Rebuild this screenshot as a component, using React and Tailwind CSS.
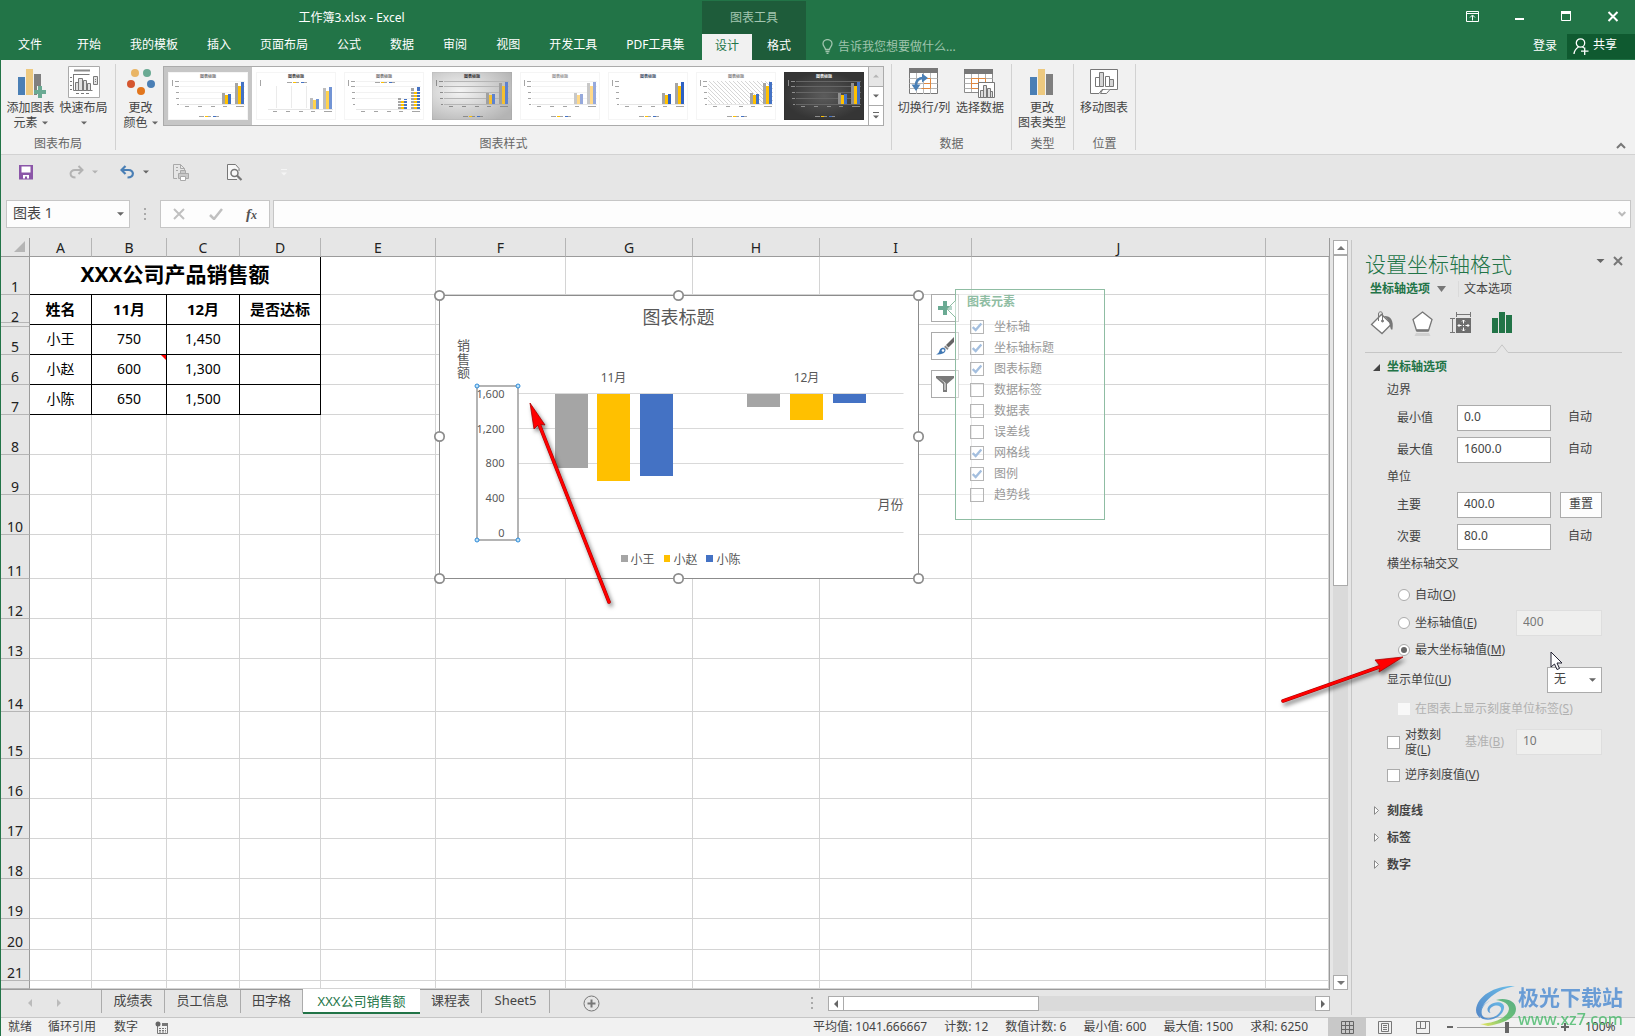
import { useState } from 'react';

const RIBBON_TABS = ['开始', '我的模板', '插入', '页面布局', '公式', '数据', '审阅', '视图', '开发工具', 'PDF工具集'];

const COLUMNS = [
  { name: 'A', width: 'w-[62px]' },
  { name: 'B', width: 'w-[75px]' },
  { name: 'C', width: 'w-[73px]' },
  { name: 'D', width: 'w-[81px]' },
  { name: 'E', width: 'w-[115px]' },
  { name: 'F', width: 'w-[130px]' },
  { name: 'G', width: 'w-[127px]' },
  { name: 'H', width: 'w-[127px]' },
  { name: 'I', width: 'w-[152px]' },
  { name: 'J', width: 'w-[294px]' },
  { name: '', width: '' },
];

const DATA_ROWS = [
  { row: 2, cells: ['姓名', '11月', '12月', '是否达标'], head: true },
  { row: 5, cells: ['小王', '750', '1,450', ''] },
  { row: 6, cells: ['小赵', '600', '1,300', ''], note: 1 },
  { row: 7, cells: ['小陈', '650', '1,500', ''] },
];

const EMPTY_ROWS = [
  { row: 8, height: 'h-[40px]' },
  { row: 9, height: 'h-[40px]' },
  { row: 10, height: 'h-[40px]' },
  { row: 11, height: 'h-[44px]' },
  { row: 12, height: 'h-[40px]' },
  { row: 13, height: 'h-[40px]' },
  { row: 14, height: 'h-[53px]' },
  { row: 15, height: 'h-[47px]' },
  { row: 16, height: 'h-[40px]' },
  { row: 17, height: 'h-[40px]' },
  { row: 18, height: 'h-[40px]' },
  { row: 19, height: 'h-[40px]' },
  { row: 20, height: 'h-[31px]' },
  { row: 21, height: 'h-[31px]' },
  { row: '', height: 'h-[8px]' },
];

const CHART_ELEMENTS = [
  ['坐标轴', true],
  ['坐标轴标题', true],
  ['图表标题', true],
  ['数据标签', false],
  ['数据表', false],
  ['误差线', false],
  ['网格线', true],
  ['图例', true],
  ['趋势线', false],
];

const SHEETS = [
  { name: '成绩表', width: 'w-[63px]' },
  { name: '员工信息', width: 'w-[76px]' },
  { name: '田字格', width: 'w-[62px]' },
  { name: 'XXX公司销售额', width: 'w-[117px]' },
  { name: '课程表', width: 'w-[62px]' },
  { name: 'Sheet5', width: 'w-[68px]' },
];

const STATS = ['平均值: 1041.666667', '计数: 12', '数值计数: 6', '最小值: 600', '最大值: 1500', '求和: 6250'];

function Caret({ className = 'text-[#666]', size = 7 }) {
  return (
    <svg width={size} height="4" viewBox="0 0 8 4" className={className} aria-hidden="true">
      <path d="M0 0h8L4 4z" fill="currentColor" />
    </svg>
  );
}

/* ---------- title bar ---------- */

function TitleBar() {
  return (
    <header className="flex h-[60px] bg-[#227447] text-white">
      <div className="flex w-[701px] shrink-0 flex-col">
        <div className="h-[34px] text-center leading-[35px]">工作簿3.xlsx - Excel</div>
        <nav className="flex h-[26px] gap-[29px] pl-[17px] leading-[21px] whitespace-nowrap">
          <button className="mr-[6px] h-[21px]">文件</button>
          {RIBBON_TABS.map((tab) => (
            <button key={tab} className="h-[21px]">
              {tab}
            </button>
          ))}
        </nav>
      </div>
      <div className="mt-px flex w-[104px] shrink-0 flex-col bg-[#1e5c3a]">
        <div className="h-[33px] text-center leading-[33px] text-[#a3c6b0]">图表工具</div>
        <div className="flex h-[26px] leading-[21px]">
          <button className="w-[50px] bg-[#f1f1f1] pb-[4px] text-[#227447]">设计</button>
          <button className="flex-1 pb-[4px]">格式</button>
        </div>
      </div>
      <div className="flex min-w-0 flex-1 flex-col">
        <div className="flex h-[34px] items-center justify-end gap-[35px] pr-[16px] pb-[2px]">
          <button aria-label="功能区显示选项">
            <svg width="13" height="11" viewBox="0 0 13 11" fill="none" stroke="#fff">
              <path d="M.5.5h12v10H.5zM.5 2.500h12M6.500 9.500V4.500M4 6.500l2.500-2.500L9 6.500" />
            </svg>
          </button>
          <button aria-label="最小化">
            <svg width="12" height="11" viewBox="0 0 12 11">
              <path d="M1 7h9v2H1z" fill="#fff" />
            </svg>
          </button>
          <button aria-label="最大化">
            <svg width="11" height="11" viewBox="0 0 11 11">
              <path d="M.5.5h9v9h-9z" fill="none" stroke="#fff" />
              <path d="M0 0h10v3H0z" fill="#fff" />
            </svg>
          </button>
          <button aria-label="关闭">
            <svg width="12" height="11" viewBox="0 0 12 11" stroke="#fff" strokeWidth="2">
              <path d="M1.500 1l9 9M10.500 1l-9 9" />
            </svg>
          </button>
        </div>
        <div className="flex h-[26px] items-start">
          <label className="ml-[16px] flex h-[25px] flex-1 items-center gap-[5px]">
            <svg width="11" height="15" viewBox="0 0 11 15" fill="none" stroke="#9fc4ad" strokeWidth="1.300">
              <path d="M3.500 10.500C3.500 8.500 1 7.500 1 4.800a4.500 4.200 0 0 1 9 0C10 7.500 7.500 8.500 7.500 10.500zM3.500 12.500h4M4.500 14.300h2" />
            </svg>
            <input
              aria-label="告诉我您想要做什么"
              placeholder="告诉我您想要做什么..."
              className="w-[200px] bg-transparent outline-none placeholder:text-[#9fc4ad]"
            />
          </label>
          <button className="mr-[10px] leading-[23px]">登录</button>
          <button className="flex h-[25px] w-[68px] items-center gap-[4px] bg-[#0f5a30] pl-[6px] leading-[18px]">
            <svg width="16" height="17" viewBox="0 0 16 17" fill="none" stroke="#fff" strokeWidth="1.300">
              <circle cx="7.500" cy="5" r="4.200" />
              <path d="M1 16c.3-3 2-5.500 4.500-7M9.500 9l1.500 1M8 13.200h7.500M11.700 9.500V17" />
            </svg>
            <span className="pb-[3px]">共享</span>
          </button>
        </div>
      </div>
    </header>
  );
}

/* ---------- ribbon ---------- */

function AddElementIcon() {
  return (
    <svg width="30" height="32" viewBox="0 0 30 32">
      <path d="M2 11h7v18H2z" fill="#4a7fb5" />
      <path d="M10 3h7v26h-7z" fill="#edc97f" />
      <path d="M18 8h7v12h-4v9h-3z" fill="#7f7f7f" />
      <path d="M22 20h4v4h4v4h-4v4h-4v-4h-4v-4h4z" fill="#6aaa93" />
    </svg>
  );
}

function QuickLayoutIcon() {
  return (
    <svg width="32" height="32" viewBox="0 0 32 32" fill="none" stroke="#7a7a7a">
      <path d="M.5.500h31v31H.5z" fill="#fff" stroke="#aaa" />
      <path d="M6 4.500h16" stroke="#8a8a8a" strokeWidth="2" />
      <path d="M5.500 8.500h16M5.500 24.500h19M5.500 8v16.500M2 11.500h2M2 15.500h2M2 19.500h2M2 23.500h2M8 27.500h3M13 27.500h3M18 27.500h3" />
      <path d="M7.500 16.500h3v8h-3zM10.500 12.500h4v12h-4zM15.500 14.500h3v10h-3zM19.500 17.500h3v7h-3zM25.500 10.500h4v8h-4zM27 13.500h1M27 15.500h1" fill="#e3e3e3" />
    </svg>
  );
}

function ColorDotsIcon() {
  return (
    <svg width="30" height="32" viewBox="0 0 30 32">
      <circle cx="9" cy="7" r="4" fill="#e9b565" />
      <circle cx="21" cy="7" r="4" fill="#6aaa93" />
      <circle cx="5" cy="18" r="4" fill="#d5562f" />
      <circle cx="25" cy="18" r="4" fill="#4a7fb5" />
      <circle cx="15" cy="25" r="4" fill="#e2761d" />
    </svg>
  );
}

function SwapIcon() {
  return (
    <svg width="30" height="32" viewBox="0 0 30 32" fill="none" stroke="#777">
      <path d="M.5 2.500h28v25H.5z" fill="#fff" />
      <path d="M0 2h29v5H0z" fill="#777" stroke="none" />
      <path d="M.5 12.500h28M.5 17.500h28M.5 22.500h28M7.500 7v21M14.500 7v21M21.500 7v21" stroke="#b8b8b8" />
      <path d="M15.500 12.500h6v10h-9M15 17.500h6.500" stroke="#e0883f" />
      <path d="M7 20.500C6.500 14.500 10 11.500 15 12" stroke="#4a7fb5" strokeWidth="2.500" />
      <path d="M13 7.500l6 4.500-6 4.500zM2.500 18.500h9L7 25z" fill="#4a7fb5" stroke="none" />
    </svg>
  );
}

function SelectDataIcon() {
  return (
    <svg width="32" height="32" viewBox="0 0 32 32" fill="none" stroke="#8a8a8a">
      <path d="M.5 3.500h28v23H.5z" fill="#fff" />
      <path d="M0 3h29v5H0z" fill="#777" stroke="none" />
      <path d="M.5 12.500h28M.5 17.500h28M.5 22.500h28M7.500 8v18M14.500 8v18M21.500 8v18" stroke="#b0b0b0" />
      <path d="M7.500 12.500h14M7.500 12.500v10h7M7.500 17.500h14M14.500 12.500v10M21.500 12.500v5" stroke="#e0883f" />
      <path d="M14.500 16.500h16v15h-16z" fill="#fff" stroke="#777" />
      <path d="M16.500 24.500h3v7h-3zM19.500 19.500h3v12h-3zM23.500 22.500h3v9h-3zM26.500 25.500h2v6h-2z" fill="#ddd" stroke="#777" />
    </svg>
  );
}

function ChartTypeIcon() {
  return (
    <svg width="24" height="32" viewBox="0 0 24 32">
      <path d="M0 11h7v18H0z" fill="#4a7fb5" />
      <path d="M8 3h7v26H8z" fill="#edc97f" />
      <path d="M16 8h7v21h-7z" fill="#7f7f7f" />
    </svg>
  );
}

function MoveChartIcon() {
  return (
    <svg width="28" height="32" viewBox="0 0 28 32" fill="none" stroke="#777">
      <path d="M.5 3.500h27v20H12l-3 4H.5z" fill="#fff" />
      <path d="M12.500 24l-2 3.500h6l3.500-4" fill="#fff" />
      <path d="M5.500 11.500h4v9h-4zM15.500 10.500h4v10h-4z" fill="#fff" />
      <path d="M9.500 6.500h4v14h-4zM19.500 13.500h4v7h-4z" fill="#d5d5d5" />
    </svg>
  );
}

function RibbonButton({ icon, lines, caret, className }) {
  return (
    <button className={`flex shrink-0 flex-col items-center pt-[2px] leading-[15px] whitespace-nowrap text-[#444] ${className}`}>
      {icon}
      <span className="mt-[2px]">{lines[0]}</span>
      <span className="flex h-[15px] items-center gap-[4px]">
        {lines[1]}
        {caret && <Caret size={6} />}
      </span>
    </button>
  );
}

function RibbonGroup({ title, className, children }) {
  return (
    <section className={`flex shrink-0 flex-col justify-between border-r border-[#d2d2d2] ${className}`}>
      <div className="flex">{children}</div>
      <h2 className="h-[13px] text-center leading-[13px] text-[#666]">{title}</h2>
    </section>
  );
}

// Chart style thumbnails, one entry for each preview of the gallery
const STYLES = [
  { bg: '#fff', colors: ['#a5a5a5', '#ffc000', '#4472c4'], title: '#777' },
  { bg: '#fff', colors: ['#bdbdbd', '#ffd24d', '#7294d4'], title: '#444', legendTop: true, vertical: true },
  { bg: '#fff', colors: ['#a5a5a5', '#ffc000', '#4472c4'], title: '#777', legendTop: true, striped: true },
  { bg: 'url(#silver)', colors: ['#a0a0a0', '#f5c030', '#5d82cf'], title: '#333', grid: '#b5b5b5' },
  { bg: '#fff', colors: ['#c8c8c8', '#ffd98a', '#96a9dc'], title: '#999' },
  { bg: '#fff', colors: ['#a5a5a5', '#ffc000', '#2f62c4'], title: '#44546a', plain: true },
  { bg: '#fff', colors: ['#a5a5a5', '#ffc000', '#4472c4'], title: '#888', hatch: true },
  { bg: 'url(#coal)', colors: ['#909090', '#ffc000', '#4472c4'], title: '#eee', grid: '#666' },
];

const THUMB_BARS = [
  [54, 21, 0],
  [57, 23, 1],
  [60, 22, 2],
  [67, 11, 0],
  [70, 14, 1],
  [73, 10, 2],
];

function StyleThumb({ style }) {
  const shift = style.legendTop ? 5 : 0;
  const ink = style.grid ? '#8c8c8c' : '#a5a5a5';
  return (
    <svg width="80" height="48" viewBox="0 0 80 48">
      <rect width="80" height="48" fill={style.bg} />
      <rect x=".5" y=".5" width="79" height="47" fill="none" stroke="#000" strokeOpacity=".04" />
      <text x="40" y="6" fontSize="4" fontWeight="bold" textAnchor="middle" fill={style.title}>
        图表标题
      </text>
      {style.hatch && <rect x="12" y="9" width="65" height="23" fill="url(#hatch)" />}
      {!style.vertical && !style.plain && !style.hatch && (
        <path d="M12 9.500h65M12 14.500h65M12 20.500h65M12 26.500h65" stroke={style.grid || '#f2f2f2'} />
      )}
      {style.vertical && <path d="M20.500 14v22M35.500 14v22M50.500 14v22" stroke="#ebebeb" />}
      <path d={style.legendTop ? 'M12 37.500h65' : 'M12 32.500h65'} stroke={style.grid || '#e6e6e6'} />
      <path d="M4.500 8v6" stroke={ink} />
      {!style.vertical && <path d="M7 9.500h4M7 14.500h4M8 20.500h3M8 26.500h3M9 32.500h2" stroke={ink} />}
      {THUMB_BARS.map(([x, y, series]) => (
        <rect key={x} x={x} y={y + shift} width="3" height={32 - y} fill={style.colors[series]} />
      ))}
      {style.striped && (
        <path d="M54 28.500h9M54 31.500h9M54 34.500h9M67 19.500h10M67 22.500h10M67 25.500h10M67 28.500h10M67 31.500h10M67 34.500h10" stroke="#fff" />
      )}
      <g stroke={ink} transform={`translate(0 ${shift})`}>
        <path d="M17 34.500h4M30 34.500h4M43 34.500h4M55 34.500h4M68 34.500h8" />
      </g>
      <g transform={style.legendTop ? 'translate(0 -34)' : undefined}>
        <path d="M31 44.500h5M40 44.500h3M48 44.500h3" stroke={ink} />
        <path d="M37 44.500h3" stroke="#ffc000" />
        <path d="M45 44.500h3" stroke="#4472c4" />
      </g>
    </svg>
  );
}

function StyleGallery() {
  return (
    <div className="mt-[2px] ml-[3px] flex h-[60px] w-[721px] border border-[#ababab] bg-white">
      <svg width="0" height="0" className="absolute" aria-hidden="true">
        <defs>
          <radialGradient id="silver" cx=".35" cy=".4" r=".75">
            <stop offset="0" stopColor="#f4f4f4" />
            <stop offset="1" stopColor="#b4b4b4" />
          </radialGradient>
          <radialGradient id="coal">
            <stop offset="0" stopColor="#5c5c5c" />
            <stop offset="1" stopColor="#353535" />
          </radialGradient>
          <pattern id="hatch" width="4" height="4" patternUnits="userSpaceOnUse">
            <path d="M0 0l4 4" stroke="#ccc" strokeWidth=".8" />
          </pattern>
        </defs>
      </svg>
      <div className="flex flex-1">
        {STYLES.map((style, i) => (
          <button
            key={i}
            aria-label={`样式 ${i + 1}`}
            className={
              i === 0
                ? 'flex h-[58px] w-[88px] items-center justify-center bg-[#c6c6c6]'
                : 'flex h-[58px] w-[88px] items-center justify-center'
            }
          >
            <StyleThumb style={style} />
          </button>
        ))}
      </div>
      <div className="flex w-[15px] flex-col divide-y divide-[#ababab] border-l border-[#ababab]">
        <button aria-label="上一行" className="flex flex-1 items-center justify-center bg-[#e6e6e6]">
          <Caret size={6} className="rotate-180 text-[#b5b5b5]" />
        </button>
        <button aria-label="下一行" className="flex flex-1 items-center justify-center">
          <Caret size={6} />
        </button>
        <button aria-label="其他" className="flex flex-1 flex-col items-center justify-center gap-[2px]">
          <span className="h-px w-[6px] bg-[#666]" />
          <Caret size={6} />
        </button>
      </div>
    </div>
  );
}

function Ribbon() {
  return (
    <div className="flex h-[95px] border-b border-[#d2d2d2] bg-[#f1f1f1] py-[4px]">
      <RibbonGroup title="图表布局" className="w-[115px]">
        <RibbonButton icon={<AddElementIcon />} lines={['添加图表', '元素']} caret className="ml-[3px] w-[53px]" />
        <RibbonButton icon={<QuickLayoutIcon />} lines={['快速布局', '']} caret className="w-[53px]" />
      </RibbonGroup>
      <RibbonGroup title="图表样式" className="w-[776px]">
        <RibbonButton icon={<ColorDotsIcon />} lines={['更改', '颜色']} caret className="ml-[5px] w-[39px]" />
        <StyleGallery />
      </RibbonGroup>
      <RibbonGroup title="数据" className="w-[120px]">
        <RibbonButton icon={<SwapIcon />} lines={['切换行/列']} className="ml-[4px] w-[56px]" />
        <RibbonButton icon={<SelectDataIcon />} lines={['选择数据']} className="w-[56px]" />
      </RibbonGroup>
      <RibbonGroup title="类型" className="w-[62px]">
        <RibbonButton icon={<ChartTypeIcon />} lines={['更改', '图表类型']} className="w-[60px]" />
      </RibbonGroup>
      <RibbonGroup title="位置" className="w-[62px]">
        <RibbonButton icon={<MoveChartIcon />} lines={['移动图表']} className="w-[60px]" />
      </RibbonGroup>
      <button aria-label="折叠功能区" className="mr-[9px] ml-auto self-end">
        <svg width="10" height="8" viewBox="0 0 10 8" fill="none" stroke="#777" strokeWidth="2">
          <path d="M1 6l4-4 4 4" />
        </svg>
      </button>
    </div>
  );
}

/* ---------- quick access + formula bar ---------- */

function QuickAccess() {
  return (
    <div className="flex h-[45px] items-center pb-[11px] pl-[18px]">
      <button aria-label="保存" className="w-[14px]">
        <svg width="14" height="15" viewBox="0 0 14 15">
          <path d="M0 0h14v14.500H0z" fill="#8b56a8" />
          <path d="M2.500 1.500h9v6h-9zM4 10h6v3.500H8V11.500H6v2H4z" fill="#fff" />
        </svg>
      </button>
      <button aria-label="恢复" className="ml-[36px] flex items-center gap-[8px]">
        <svg width="15" height="14" viewBox="0 0 15 14" fill="none" stroke="#b3b3b3" strokeWidth="2">
          <path d="M13 5H6C0 5 0 12.500 6.500 12.500M9.500 1l4 4-4 4" />
        </svg>
        <Caret size={6} className="text-[#b3b3b3]" />
      </button>
      <button aria-label="撤消" className="ml-[22px] flex items-center gap-[8px]">
        <svg width="15" height="14" viewBox="0 0 15 14" fill="none" stroke="#4a7fb5" strokeWidth="2.200">
          <path d="M2 5h6.500c6 0 6 7.500-1 7.500M5.500 1l-4 4 4 4" />
        </svg>
        <Caret size={6} />
      </button>
      <button aria-label="快速打印" className="ml-[24px]">
        <svg width="16" height="17" viewBox="0 0 16 17" fill="none" stroke="#a9a9a9">
          <path d="M4 14.500H.5V.5h7l4 4V6M7.500.500v4h4M3 3.500h2M3 6.500h2" />
          <path d="M7.500 9V6.500h5V9M5.500 9.500h10v5h-10z" fill="#c9c9c9" />
          <path d="M7.500 12.500h5v4h-5z" fill="#fff" />
        </svg>
      </button>
      <button aria-label="打印预览" className="ml-[38px]">
        <svg width="16" height="17" viewBox="0 0 16 17" fill="none" stroke="#777">
          <path d="M10 15.500H.5V.5h8l3.500 4V7" fill="#f8f8f8" />
          <circle cx="7.500" cy="9" r="3.500" strokeWidth="1.500" />
          <path d="M10 11.500l4.500 4.500" strokeWidth="2.200" />
        </svg>
      </button>
      <button aria-label="自定义快速访问工具栏" className="ml-[38px] flex flex-col items-center gap-[2px]">
        <span className="h-px w-[6px] bg-[#f5f5f5]" />
        <Caret size={6} className="text-[#f5f5f5]" />
      </button>
    </div>
  );
}

function FormulaBar() {
  return (
    <div className="flex h-[38px] pr-[4px] pl-[5px]">
      <label className="flex h-[28px] w-[124px] items-center border border-[#c6c6c6] bg-[#fdfdfd] pr-[5px] pl-[6px]">
        <input aria-label="名称框" defaultValue="图表 1" className="w-0 flex-1 bg-transparent pb-[3px] text-[14px] text-[#444] outline-none" />
        <Caret />
      </label>
      <div className="flex h-[28px] w-[30px] flex-col items-center justify-center gap-[3px]">
        <span className="h-[2px] w-[2px] bg-[#aaa]" />
        <span className="h-[2px] w-[2px] bg-[#aaa]" />
        <span className="h-[2px] w-[2px] bg-[#aaa]" />
      </div>
      <div className="flex h-[28px] w-[110px] items-center justify-between border border-[#c6c6c6] bg-[#fdfdfd] px-[12px]">
        <button aria-label="取消">
          <svg width="12" height="12" viewBox="0 0 12 12" stroke="#c0c0c0" strokeWidth="2">
            <path d="M1 1l10 10M11 1L1 11" />
          </svg>
        </button>
        <button aria-label="输入">
          <svg width="14" height="12" viewBox="0 0 14 12" fill="none" stroke="#c0c0c0" strokeWidth="2.500">
            <path d="M1 7l4 4 8-10" />
          </svg>
        </button>
        <button aria-label="插入函数" className="flex items-baseline font-['Liberation_Serif',serif] text-[15px] leading-[18px] font-bold text-[#555] italic">
          f<span className="text-[12px]">x</span>
        </button>
      </div>
      <label className="ml-[3px] flex h-[28px] flex-1 items-center border border-[#c6c6c6] bg-[#fdfdfd] pr-[4px]">
        <input aria-label="编辑栏" className="flex-1 bg-transparent px-2 outline-none" />
        <svg width="8" height="6" viewBox="0 0 8 6" fill="none" stroke="#bbb" strokeWidth="2">
          <path d="M.7 1L4 4.300 7.300 1" />
        </svg>
      </label>
    </div>
  );
}

/* ---------- worksheet ---------- */

function RowHeader({ row }) {
  return (
    <th
      scope="row"
      className="relative border-r border-b border-r-[#9b9b9b] border-b-[#b5b5b5] bg-[#e6e6e6] p-0 align-bottom leading-[14px] font-normal"
    >
      {row}
      {/* double line where rows 3 and 4 are hidden */}
      {row === 2 && <span className="absolute right-0 -bottom-[3px] left-0 z-10 h-[5px] border-y border-[#b5b5b5] bg-[#e6e6e6]" />}
    </th>
  );
}

function EmptyCells({ count }) {
  return Array.from({ length: count }, (_, i) => <td key={i} className="border-r border-b border-[#d4d4d4] p-0" />);
}

function Sheet() {
  return (
    <table className="w-full table-fixed border-separate border-spacing-0 bg-white">
      <colgroup>
        <col className="w-[29px]" />
        {COLUMNS.map((col, i) => (
          <col key={i} className={col.width} />
        ))}
      </colgroup>
      <thead>
        <tr className="h-[19px] bg-[#e6e6e6] text-[14px] leading-[16px] text-[#222]">
          <td className="border-r border-b border-[#9b9b9b] p-0">
            <svg width="12" height="12" viewBox="0 0 12 12" className="mr-[3px] ml-auto">
              <path d="M11 0v11H0z" fill="#b5b5b5" />
            </svg>
          </td>
          {COLUMNS.map((col, i) => (
            <th
              key={i}
              scope="col"
              className={
                col.name
                  ? 'border-r border-b border-r-[#b5b5b5] border-b-[#9b9b9b] p-0 align-bottom font-normal'
                  : 'border-b border-[#9b9b9b] p-0'
              }
            >
              {col.name}
            </th>
          ))}
        </tr>
      </thead>
      <tbody className="text-[14px] leading-[16px] text-[#222]">
        <tr className="h-[38px]">
          <RowHeader row={1} />
          <td colSpan={4} className="border-r border-b border-black p-0 pb-[3px] text-center text-[21px] leading-[30px] font-bold text-black">
            XXX公司产品销售额
          </td>
          <EmptyCells count={7} />
        </tr>
        {DATA_ROWS.map((item) => (
          <tr key={item.row} className="h-[30px]">
            <RowHeader row={item.row} />
            {item.cells.map((cell, i) => (
              <td
                key={i}
                className={
                  item.head
                    ? 'border-r border-b border-black p-0 pb-[2px] text-center text-[15px] font-bold text-black'
                    : 'relative border-r border-b border-black p-0 pb-[2px] text-center text-black'
                }
              >
                {cell}
                {item.note === i && (
                  <svg width="5" height="5" viewBox="0 0 5 5" className="absolute top-0 right-0">
                    <path d="M0 0h5v5z" fill="#f00" />
                  </svg>
                )}
              </td>
            ))}
            <EmptyCells count={7} />
          </tr>
        ))}
        {EMPTY_ROWS.map((item) => (
          <tr key={item.row} className={item.height}>
            <RowHeader row={item.row} />
            <EmptyCells count={11} />
          </tr>
        ))}
      </tbody>
    </table>
  );
}

const BARS = [
  [116, 99, 74, '#a5a5a5'],
  [158, 99, 87, '#ffc000'],
  [201, 99, 82, '#4472c4'],
  [308, 99, 13, '#a5a5a5'],
  [351, 99, 26, '#ffc000'],
  [394, 99, 9, '#4472c4'],
];

const HANDLES = [
  [0, 0],
  [239, 0],
  [479, 0],
  [0, 141],
  [479, 141],
  [0, 283],
  [239, 283],
  [479, 283],
];

function ChartObject() {
  return (
    <svg width="496" height="299" viewBox="-8.500 -8.500 496 299" className="absolute top-[49px] left-[430px]" fill="#595959">
      <rect x="0" y="0" width="479" height="283" fill="#fff" stroke="#8c8c8c" />
      <text x="239" y="28" fontSize="18" textAnchor="middle">图表标题</text>
      <g fontSize="13" textAnchor="middle">
        <text x="24" y="54">销</text>
        <text x="24" y="68">售</text>
        <text x="24" y="81">额</text>
      </g>
      <path d="M79 98h385M79 133h385M79 168h385M79 203h385M79 237h385" stroke="#d9d9d9" />
      {BARS.map(([x, y, h, color]) => (
        <rect key={x} x={x - 0.5} y={y - 0.5} width="33" height={h} fill={color} />
      ))}
      <g fontSize="12" textAnchor="middle">
        <text x="174" y="86">11月</text>
        <text x="367" y="86">12月</text>
      </g>
      <g fontSize="11" textAnchor="end">
        <text x="65" y="102">1,600</text>
        <text x="65" y="137">1,200</text>
        <text x="65" y="171">800</text>
        <text x="65" y="206">400</text>
        <text x="65" y="241">0</text>
      </g>
      <text x="464" y="213" fontSize="13" textAnchor="end">月份</text>
      <g fontSize="12">
        <path d="M181.500 259.500h7v7h-7z" fill="#a5a5a5" />
        <text x="191" y="268">小王</text>
        <path d="M224.500 259.500h6v7h-6z" fill="#ffc000" />
        <text x="234" y="268">小赵</text>
        <path d="M266.500 259.500h7v7h-7z" fill="#4472c4" />
        <text x="277" y="268">小陈</text>
      </g>
      {/* selected value axis */}
      <rect x="37.500" y="90.500" width="41" height="154" fill="none" stroke="#8c8c8c" strokeWidth="1.300" />
      <g fill="#bfe3fa" stroke="#2e8bd8">
        <circle cx="37.500" cy="90.500" r="2" />
        <circle cx="78.500" cy="90.500" r="2" />
        <circle cx="37.500" cy="244.500" r="2" />
        <circle cx="78.500" cy="244.500" r="2" />
      </g>
      {HANDLES.map(([x, y]) => (
        <circle key={`${x}-${y}`} cx={x} cy={y} r="4.700" fill="#fff" stroke="#8c8c8c" strokeWidth="1.700" />
      ))}
    </svg>
  );
}

function ChartButtons() {
  return (
    <div className="absolute top-[56px] left-[930px] flex flex-col gap-[10px]">
      <button aria-label="图表元素" className="flex h-[28px] w-[28px] items-center justify-center border border-[#ababab] bg-white">
        <svg width="14" height="14" viewBox="0 0 14 14">
          <path d="M5 0h4v5h5v4H9v5H5V9H0V5h5z" fill="#6aaa93" />
        </svg>
      </button>
      <button aria-label="图表样式" className="flex h-[28px] w-[28px] items-center justify-center border border-[#ababab] bg-white">
        <svg width="18" height="18" viewBox="0 0 18 18">
          <path d="M18 0v5l-5.500 5.500-2.500-2.500z" fill="#666" />
          <path d="M9.500 8.500l3 3-1 1.500-3.500-3z" fill="#888" />
          <path d="M0 17.500c3-1 3-3 4-5 1.500-2.500 5-2 5.500 0 .6 3-3 5-9.500 5z" fill="#3f77b3" />
          <circle cx="7" cy="13.500" r="1.300" fill="#fff" />
        </svg>
      </button>
      <button aria-label="图表筛选器" className="flex h-[28px] w-[28px] items-center justify-center border border-[#ababab] bg-white">
        <svg width="18" height="16" viewBox="0 0 18 16">
          <path d="M0 0h18v2l-7 6v8H7V8L0 2z" fill="#7a7a7a" />
          <path d="M2.500 1.500L8.500 7v7h1V7z" fill="#fff" />
        </svg>
      </button>
    </div>
  );
}

function ElementsPanel() {
  const [elements, setElements] = useState(CHART_ELEMENTS);

  const toggle = (index) => {
    setElements(elements.map(([name, on], i) => [name, i === index ? !on : on]));
  };

  return (
    <div className="absolute top-[51px] left-[954px] h-[231px] w-[150px] border border-[#8fbda3] bg-white/50 pt-[4px] pl-[11px]">
      <svg width="11" height="18" viewBox="0 0 11 18" className="absolute top-[10px] -left-[10px]">
        <path d="M10.500 0L1 9l9.500 9z" fill="#fff" fillOpacity=".5" stroke="none" />
        <path d="M10 0L1 9l9 9" fill="none" stroke="#8fbda3" />
      </svg>
      <h2 className="font-bold leading-[16px] text-[#8fbda3]">图表元素</h2>
      <div className="mt-[6px] ml-[3px] flex flex-col">
        {elements.map(([name, on], i) => (
          <label key={name} className="flex h-[21px] items-center gap-[10px] text-[#999]">
            <span className="relative h-[14px] w-[14px]">
              <input
                type="checkbox"
                checked={on}
                onChange={() => toggle(i)}
                className="block h-[14px] w-[14px] appearance-none border border-[#b5b5b5]"
              />
              {on && (
                <svg width="10" height="10" viewBox="0 0 10 10" className="pointer-events-none absolute top-[2px] left-[2px]">
                  <path d="M.7 5l3 3 5.600-6.500" fill="none" stroke="#a4bfdf" strokeWidth="2.300" />
                </svg>
              )}
            </span>
            {name}
          </label>
        ))}
      </div>
    </div>
  );
}

function VerticalScroll() {
  return (
    <div className="mx-[3px] mt-[2px] flex w-[15px] flex-col bg-[#dadada]">
      <button aria-label="向上滚动" className="flex h-[15px] items-center justify-center border border-[#ababab] bg-white">
        <Caret size={8} className="rotate-180 text-[#777]" />
      </button>
      <div className="h-[331px] border border-[#ababab] bg-white" />
      <button aria-label="向下滚动" className="mt-auto flex h-[15px] items-center justify-center border border-[#ababab] bg-white">
        <Caret size={8} className="text-[#777]" />
      </button>
    </div>
  );
}

function SheetTabs() {
  const [active, setActive] = useState('XXX公司销售额');

  return (
    <div className="flex h-[27px] text-[13px] text-[#444]">
      <div className="flex h-[26px] w-[100px] items-center gap-[25px] pl-[27px]">
        <button aria-label="上一张">
          <svg width="4" height="8" viewBox="0 0 4 8"><path d="M4 0v8L0 4z" fill="#bbb" /></svg>
        </button>
        <button aria-label="下一张">
          <svg width="4" height="8" viewBox="0 0 4 8"><path d="M0 0v8l4-4z" fill="#bbb" /></svg>
        </button>
      </div>
      <div className="flex h-[23px] border-l border-[#ababab] leading-[20px]">
        {SHEETS.map((sheet) => (
          <button
            key={sheet.name}
            onClick={() => setActive(sheet.name)}
            className={
              sheet.name === active
                ? `${sheet.width} relative -mt-px h-[25px] border-b-[2px] border-[#227447] bg-white whitespace-nowrap text-[#227447]`
                : `${sheet.width} border-r border-[#ababab] pb-[3px] whitespace-nowrap`
            }
          >
            {sheet.name}
          </button>
        ))}
      </div>
      <button aria-label="新工作表" className="ml-[33px] flex h-[26px] items-center">
        <svg width="17" height="17" viewBox="0 0 17 17" fill="none" stroke="#777">
          <circle cx="8.500" cy="8.500" r="7.500" />
          <path d="M8.500 4.500v8M4.500 8.500h8" strokeWidth="2" />
        </svg>
      </button>
      <div className="mr-[15px] ml-auto flex h-[26px] flex-col items-center justify-center gap-[3px]">
        <span className="h-[2px] w-[2px] bg-[#aaa]" />
        <span className="h-[2px] w-[2px] bg-[#aaa]" />
        <span className="h-[2px] w-[2px] bg-[#aaa]" />
      </div>
      <div className="mt-[6px] mr-[21px] flex h-[15px] w-[502px] bg-[#dadada]">
        <button aria-label="向左滚动" className="flex w-[16px] items-center justify-center border border-[#ababab] bg-white">
          <svg width="4" height="8" viewBox="0 0 4 8"><path d="M4 0v8L0 4z" fill="#666" /></svg>
        </button>
        <div className="w-[195px] border border-l-0 border-[#ababab] bg-white" />
        <button aria-label="向右滚动" className="ml-auto flex w-[15px] items-center justify-center border border-[#ababab] bg-white">
          <svg width="4" height="8" viewBox="0 0 4 8"><path d="M0 0v8l4-4z" fill="#666" /></svg>
        </button>
      </div>
    </div>
  );
}

/* ---------- format pane ---------- */

function PaneField({ label, id, value, className, children }) {
  return (
    <div className={`flex h-[26px] items-center pl-[10px] ${className}`}>
      <label htmlFor={id} className="w-[60px]">{label}</label>
      <input id={id} defaultValue={value} className="mr-[9px] h-[26px] w-[94px] border border-[#ababab] bg-white pb-[4px] pl-[6px] outline-none" />
      {children}
    </div>
  );
}

function CrossOption({ id, text, hotkey, checked, onChange }) {
  return (
    <>
      <span className="relative mr-[5px] h-[12px] w-[12px]">
        <input
          id={id}
          type="radio"
          name="cross"
          checked={checked}
          onChange={onChange}
          className="block h-[12px] w-[12px] appearance-none rounded-full border border-[#ababab] bg-white"
        />
        {checked && <span className="pointer-events-none absolute top-[3px] left-[3px] h-[6px] w-[6px] rounded-full bg-[#666]" />}
      </span>
      <label htmlFor={id}>
        {text}(<u>{hotkey}</u>)
      </label>
    </>
  );
}

function FormatPane() {
  const [cross, setCross] = useState('max');

  return (
    <aside className="mt-[2px] mb-[2px] w-[284px] shrink-0 border-l border-[#c6c6c6] pr-[13px] pl-[13px] leading-[16px] text-[#444]">
      <div className="mt-[9px] mb-px flex h-[30px] items-center">
        <h1 className="flex-1 text-[21px] leading-[30px] font-light text-[#227447]">设置坐标轴格式</h1>
        <button aria-label="任务窗格选项" className="mr-[8px] pb-[7px]">
          <Caret size={9} />
        </button>
        <button aria-label="关闭窗格" className="-mr-[1px] pb-[7px]">
          <svg width="10" height="10" viewBox="0 0 10 10" stroke="#777" strokeWidth="2">
            <path d="M1 1l8 8M9 1L1 9" />
          </svg>
        </button>
      </div>
      <div className="flex h-[18px] items-center pl-[5px]">
        <button className="flex items-center gap-[7px] font-bold text-[#227447]">
          坐标轴选项
          <svg width="9" height="6" viewBox="0 0 9 6"><path d="M0 0h9L4.500 6z" fill="#777" /></svg>
        </button>
        <button className="ml-[12px] border-l border-[#dadada] pl-[5px]">文本选项</button>
      </div>
      <div className="flex h-[46px] items-center gap-[14px] pt-[4px] pl-[5px]">
        <button aria-label="填充与线条">
          <svg width="26" height="26" viewBox="0 0 26 26" fill="none" stroke="#777">
            <path d="M1.500 14.500l10-10 10 9.500-9.500 9.500z" fill="#fff" strokeWidth="1.300" />
            <path d="M8.500 11V4c0-3 4-3 4 0v6.500" />
            <path d="M14 6c6-.5 10 4 8.500 13 0 1-1.500 1-2-1-1-4-1-8-6.500-12z" fill="#777" stroke="none" />
            <circle cx="12.500" cy="11" r="1" fill="#777" />
          </svg>
        </button>
        <button aria-label="效果">
          <svg width="26" height="26" viewBox="0 0 26 26" fill="none" stroke="#777">
            <path d="M6 23h13l1.500 3H4.500z" fill="#d0d0d0" stroke="none" />
            <path d="M12.500 2l9.500 7.500-3.500 11h-12L3 9.500z" fill="#fff" strokeWidth="1.300" />
            <path d="M6.500 20.500h12" strokeWidth="2.500" />
          </svg>
        </button>
        <button aria-label="大小与属性">
          <svg width="26" height="26" viewBox="0 0 26 26" fill="none" stroke="#777">
            <path d="M6 8h15v15H6z" fill="#6d6d6d" stroke="none" />
            <path d="M6.500 4.500h14M6.500 2v5M20.500 2v5M2.500 8.500v14M0 8.500h5M0 22.500h5" />
            <path d="M13.500 10v3.500M13.500 17.500V21M8 15.500h3.500M15.500 15.500H19M13 15.500h1M12 11.500l1.500-1.500 1.500 1.500M12 19.500l1.500 1.500 1.500-1.500M9.500 14L8 15.500 9.500 17M17.500 14l1.500 1.500-1.500 1.500" stroke="#fff" />
          </svg>
        </button>
        <button aria-label="坐标轴选项">
          <svg width="26" height="26" viewBox="0 0 26 26" fill="#227447">
            <path d="M2 8h6v15H2zM9 2h6v21H9zM16 5h6v18h-6z" />
          </svg>
        </button>
      </div>
      <div className="flex h-[9px] items-end">
        <div className="w-[130px] border-b border-[#c6c6c6]" />
        <svg width="14" height="9" viewBox="0 0 14 9"><path d="M0 8.500h1L7 .8l6 7.700h1" fill="none" stroke="#c6c6c6" /></svg>
        <div className="flex-1 border-b border-[#c6c6c6]" />
      </div>

      <button className="mt-[3px] flex h-[22px] items-center gap-[7px] pl-[8px] font-bold text-[#227447]">
        <svg width="7" height="7" viewBox="0 0 7 7"><path d="M7 0v7H0z" fill="#444" /></svg>
        坐标轴选项
      </button>
      <div className="pl-[22px]">
        <h3 className="leading-[24px]">边界</h3>
        <PaneField id="min" label="最小值" value="0.0" className="mt-[3px]">
          <span className="pb-[2px] pl-[8px]">自动</span>
        </PaneField>
        <PaneField id="maxv" label="最大值" value="1600.0" className="mt-[6px]">
          <span className="pb-[2px] pl-[8px]">自动</span>
        </PaneField>
        <h3 className="mt-[4px] leading-[20px]">单位</h3>
        <PaneField id="major" label="主要" value="400.0" className="mt-[5px]">
          <button className="h-[26px] w-[42px] border border-[#ababab] bg-[#fdfdfd] pb-[2px]">重置</button>
        </PaneField>
        <PaneField id="minor" label="次要" value="80.0" className="mt-[6px]">
          <span className="pb-[2px] pl-[8px]">自动</span>
        </PaneField>
        <h3 className="mt-[4px] leading-[20px]">横坐标轴交叉</h3>
        <div className="mt-[8px] flex h-[26px] items-center pl-[11px]">
          <CrossOption id="cross-auto" text="自动" hotkey="O" checked={cross === 'auto'} onChange={() => setCross('auto')} />
        </div>
        <div className="mt-[2px] flex h-[26px] items-center pr-[20px] pl-[11px]">
          <CrossOption id="cross-value" text="坐标轴值" hotkey="E" checked={cross === 'value'} onChange={() => setCross('value')} />
          <input
            aria-label="坐标轴值"
            defaultValue="400"
            disabled={cross !== 'value'}
            className="ml-auto h-[26px] w-[86px] border border-[#dedede] bg-[#efefee] pb-[4px] pl-[6px] text-[#777]"
          />
        </div>
        <div className="mt-[1px] flex h-[26px] items-center pl-[11px]">
          <CrossOption id="cross-max" text="最大坐标轴值" hotkey="M" checked={cross === 'max'} onChange={() => setCross('max')} />
        </div>
        <div className="mt-[4px] flex h-[26px] items-center justify-between pr-[20px]">
          <label htmlFor="unit">显示单位(<u>U</u>)</label>
          <div className="relative">
            <select id="unit" className="block h-[26px] w-[55px] appearance-none border border-[#ababab] bg-white pb-[2px] pl-[6px] outline-none">
              <option>无</option>
              <option>百</option>
              <option>千</option>
            </select>
            <Caret className="pointer-events-none absolute top-[11px] right-[6px] text-[#666]" />
          </div>
        </div>
        <label className="mt-[6px] flex h-[20px] items-center gap-[5px] pl-[11px] text-[#b1b1b1]">
          <input type="checkbox" disabled className="h-[12px] w-[12px] appearance-none bg-[#f8f8f8]" />
          <span>在图表上显示刻度单位标签(<u>S</u>)</span>
        </label>
        <div className="mt-[8px] flex h-[30px] items-center pr-[20px]">
          <label className="flex w-[78px] items-center gap-[5px] leading-[15px]">
            <input type="checkbox" className="h-[13px] w-[13px] shrink-0 appearance-none border border-[#ababab] bg-white" />
            <span className="w-[38px]">对数刻度(<u>L</u>)</span>
          </label>
          <label htmlFor="base" className="text-[#b1b1b1]">基准(<u>B</u>)</label>
          <input
            id="base"
            defaultValue="10"
            disabled
            className="ml-auto h-[26px] w-[86px] border border-[#dedede] bg-[#efefee] pb-[3px] pl-[6px] text-[#777]"
          />
        </div>
        <label className="mt-[8px] flex h-[20px] items-center gap-[5px]">
          <input type="checkbox" className="h-[13px] w-[13px] appearance-none border border-[#ababab] bg-white" />
          <span>逆序刻度值(<u>V</u>)</span>
        </label>
      </div>
      <div className="mt-[12px] flex flex-col items-start pl-[9px] font-bold">
        {['刻度线', '标签', '数字'].map((name) => (
          <button key={name} className="flex h-[27px] items-center gap-[8px]">
            <svg width="5" height="9" viewBox="0 0 5 9"><path d="M.5.700v7.600L4.500 4.500z" fill="#fff" stroke="#888" /></svg>
            {name}
          </button>
        ))}
      </div>
    </aside>
  );
}

/* ---------- status bar ---------- */

function StatusBar() {
  return (
    <footer className="flex h-[19px] items-center border-t border-[#c6c6c6] bg-[#f1f1f1] whitespace-nowrap leading-[16px] text-[#444]">
      <div className="flex items-center pl-[7px]">
        <span>就绪</span>
        <span className="ml-[16px]">循环引用</span>
        <span className="ml-[18px]">数字</span>
        <svg width="13" height="13" viewBox="0 0 13 13" className="ml-[17px]" fill="none" stroke="#777">
          <path d="M2.500 5v7.500h10v-10H7" />
          <path d="M7 2h6v3H7z" fill="#777" stroke="none" />
          <path d="M4 7.500h7M4 9.500h7M4 11h7" strokeDasharray="2 1" />
          <circle cx="3" cy="3" r="2.500" fill="#666" stroke="none" />
        </svg>
      </div>
      <div className="ml-auto flex gap-[17px] pr-[20px]">
        {STATS.map((stat) => (
          <span key={stat}>{stat}</span>
        ))}
      </div>
      <button aria-label="普通" className="flex h-[18px] w-[38px] items-center justify-center bg-[#c8c8c8]">
        <svg width="13" height="13" viewBox="0 0 13 13" fill="none" stroke="#666">
          <path d="M.5.500h12v12H.5zM4.500.500v12M8.500.500v12M.5 4.500h12M.5 8.500h12" />
        </svg>
      </button>
      <button aria-label="页面布局" className="flex w-[38px] justify-center">
        <svg width="14" height="13" viewBox="0 0 14 13" fill="none" stroke="#777">
          <path d="M.5.500h13v12H.5zM3.500 2.500h7v8h-7zM5 4.500h4M5 6.500h4M5 8.500h4" />
        </svg>
      </button>
      <button aria-label="分页预览" className="flex w-[38px] justify-center">
        <svg width="14" height="13" viewBox="0 0 14 13" fill="none" stroke="#777">
          <path d="M.5.500h13v12H.5zM4.500.500v7h5v-7M.5 7.500h4" />
        </svg>
      </button>
      <button aria-label="缩小" className="ml-[5px] h-[2px] w-[6px] bg-[#666]" />
      <div className="ml-[4px] flex h-[18px] w-[100px] items-center">
        <input
          type="range"
          aria-label="缩放"
          className="h-px w-full appearance-none bg-[#999] [&::-webkit-slider-thumb]:h-[11px] [&::-webkit-slider-thumb]:w-[4px] [&::-webkit-slider-thumb]:appearance-none [&::-webkit-slider-thumb]:bg-[#666]"
        />
      </div>
      <button aria-label="放大" className="ml-[4px]">
        <svg width="8" height="8" viewBox="0 0 8 8"><path d="M3 0h2v3h3v2H5v3H3V5H0V3h3z" fill="#666" /></svg>
      </button>
      <span className="w-[66px] pl-[16px]">100%</span>
    </footer>
  );
}

/* ---------- things lying over the window ---------- */

function Arrow({ head, line, className, width, height }) {
  return (
    <svg width={width} height={height} className={`pointer-events-none absolute drop-shadow-[2px_3px_2px_rgba(0,0,0,0.5)] ${className}`}>
      <path d={line} stroke="#a80000" strokeWidth="3.600" strokeLinecap="round" />
      <path d={head} fill="#f00" stroke="#a80000" strokeWidth=".8" />
      <path d={line} stroke="#f00" strokeWidth="2.600" strokeLinecap="round" />
    </svg>
  );
}

function Watermark() {
  return (
    <div className="pointer-events-none absolute right-[12px] bottom-[7px] flex opacity-80">
      <svg width="43" height="42" viewBox="0 0 43 42">
        <defs>
          <linearGradient id="swirl" x1="0" y1="1" x2="1" y2="0">
            <stop offset="0" stopColor="#2f6fc0" />
            <stop offset="1" stopColor="#4db4ea" />
          </linearGradient>
          <linearGradient id="leaf" x1="0" y1="1" x2="1" y2="0">
            <stop offset="0" stopColor="#e8e23a" />
            <stop offset=".5" stopColor="#4db85a" />
            <stop offset="1" stopColor="#35a06e" />
          </linearGradient>
        </defs>
        <path d="M40 1C22 0 2 10 1 25c0 4 2 6 4 8C4 20 18 5 40 1z" fill="url(#swirl)" />
        <path d="M20 14c-9 2-15 9-13 16 3 6 16 3 19-5 1-4-4-6-9-3-3 2-3 5-1 6-4 0-5-5-1-8 6-5 15-3 14 3-1 8-12 14-21 11C0 31 6 17 20 14z" fill="url(#swirl)" />
        <path d="M21 15c10-3 20 1 20 9 0 9-12 14-28 17l-8-2c14-1 28-6 29-15 0-5-5-8-13-9z" fill="url(#leaf)" />
      </svg>
      <div className="flex flex-col items-start">
        <span className="text-[21px] leading-[24px] font-bold text-[#4a8ad2]">极光下载站</span>
        <span className="text-[16px] leading-[20px] font-medium text-[#45b968]">www.xz7.com</span>
      </div>
    </div>
  );
}

export default function App() {
  return (
    <div className="relative flex min-h-screen flex-col overflow-hidden border-l border-[#227447] bg-[#e6e6e6] font-['Noto_Sans','Noto_Sans_CJK_SC',sans-serif] text-[12px]">
      <TitleBar />
      <Ribbon />
      <QuickAccess />
      <FormulaBar />
      <main className="flex flex-1">
        <div className="flex min-w-0 flex-1 flex-col">
          <div className="flex flex-1">
            <div className="relative min-w-0 flex-1 overflow-hidden border-r border-b border-[#9b9b9b]">
              <Sheet />
              <ChartObject />
              <ChartButtons />
              <ElementsPanel />
            </div>
            <VerticalScroll />
          </div>
          <SheetTabs />
        </div>
        <FormatPane />
      </main>
      <StatusBar />
      <Arrow
        className="top-[400px] left-[524px]"
        width="92"
        height="210"
        line="M14 24L84 202"
        head="M5 3L9 29L14 24L20 25z"
      />
      <Arrow
        className="top-[650px] right-[225px]"
        width="134"
        height="60"
        line="M7 51L106 16"
        head="M127 7L99 10L104 16L103 22z"
      />
      <svg width="14" height="20" viewBox="0 0 14 20" className="pointer-events-none absolute top-[651px] right-[71px]">
        <path d="M1 1v15l3.500-3L7 18.500l2.500-1L7 12h5z" fill="#fff" stroke="#223" />
      </svg>
      <Watermark />
    </div>
  );
}
